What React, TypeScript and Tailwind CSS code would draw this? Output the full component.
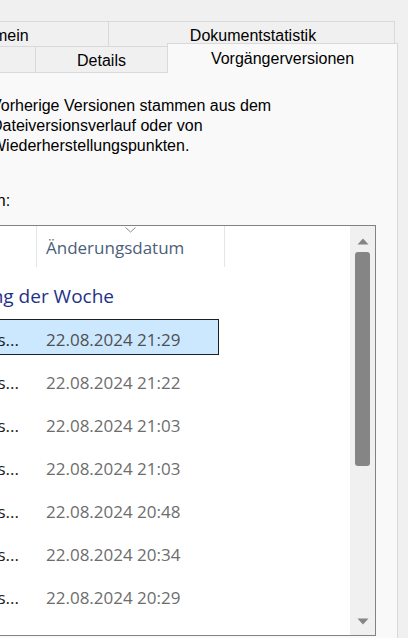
import React from "react";

const times = ["21:29", "21:22", "21:03", "21:03", "20:48", "20:34", "20:29", "19:51"];

function Row({ time, selected }: { time: string; selected?: boolean }) {
  return (
    <div className="h-[43px] pt-[3px]">
      <div
        className={
          selected
            ? "ml-[2px] flex h-[36px] w-[317px] items-center border border-[#1f1f1f] bg-[#cce8ff] pt-[5px]"
            : "ml-[2px] flex h-[36px] w-[317px] items-center border border-transparent pt-[5px]"
        }
      >
        <div className="flex w-[133px] shrink-0 justify-end overflow-hidden whitespace-nowrap pr-[17px] text-[#1a1a1a]">
          <span className="shrink-0">Bewerbungsunterlagen s...</span>
        </div>
        <div className={selected ? "pl-[10px] whitespace-nowrap text-[#505050]" : "pl-[10px] whitespace-nowrap text-[#6d6d6d]"}>
          22.08.2024 {time}
        </div>
      </div>
    </div>
  );
}

export default function App() {
  return (
    <div className="h-[638px] w-[408px] overflow-hidden bg-[#f0f0f0] font-['Liberation_Sans',Arial,sans-serif] text-[16px] text-black">
      <div className="-ml-[140px] w-[548px] pt-[21px]">
        {/* tab row 1 */}
        <div className="ml-[18px] flex h-[25px]">
          <div className="flex w-[231px] items-center justify-center border-l border-r border-t border-[#d9d9d9] bg-[#f0f0f0] pt-[3px] whitespace-nowrap">
            Allgemein
          </div>
          <div className="flex w-[286px] items-center justify-center border-r border-t border-[#d9d9d9] bg-[#f0f0f0] pl-[3px] pt-[3px] whitespace-nowrap">
            Dokumentstatistik
          </div>
        </div>
        {/* tab row 2 */}
        <div className="relative z-10 ml-[18px] flex h-[26px] items-end">
          <div className="flex h-[26px] w-[158px] items-center justify-center border-l border-r border-t border-[#d9d9d9] bg-[#f0f0f0] pt-[2px] whitespace-nowrap">
            Sicherheit
          </div>
          <div className="flex h-[26px] w-[131px] items-center justify-center border-t border-[#d9d9d9] bg-[#f0f0f0] pt-[2px] whitespace-nowrap">
            Details
          </div>
          <div className="-mb-px flex h-[30px] w-[231px] items-center justify-center border-l border-r border-t border-[#d9d9d9] bg-[#f9f9f9] whitespace-nowrap">
            Vorgängerversionen
          </div>
        </div>
        {/* panel */}
        <div className="ml-[18px] h-[600px] w-[520px] border border-[#d9d9d9] bg-[#f9f9f9] pl-[20px] pr-[21px]">
          <div className="mt-[23px] flex">
            <div className="w-[92px] shrink-0 pt-[2px]">
              <svg width="32" height="32" viewBox="0 0 32 32">
                <rect x="3" y="6" width="24" height="20" rx="2" fill="#f3c750" />
                <circle cx="20" cy="20" r="8" fill="#ffffff" stroke="#2b78d0" strokeWidth="2" />
                <path d="M20 15v5h4" fill="none" stroke="#2b78d0" strokeWidth="2" />
              </svg>
            </div>
            <div className="leading-[20px] whitespace-nowrap">
              Vorherige Versionen stammen aus dem
              <br />
              Dateiversionsverlauf oder von
              <br />
              Wiederherstellungspunkten.
            </div>
          </div>
          <div className="mt-[35px] leading-[20px]">Dateiversionen:</div>
          {/* list box */}
          <div className="mt-[14px] flex h-[411px] w-[477px] border border-[#828282] bg-white font-['Open_Sans',sans-serif] text-[17px]">
            <div className="min-w-0 flex-1 overflow-hidden">
              {/* header */}
              <div className="flex h-[41px] text-[#4c607a]">
                <div className="flex w-[137px] shrink-0 items-center border-r border-[#e5e5e5] pl-[10px] pt-[3px]">Name</div>
                <div className="relative flex w-[188px] shrink-0 items-center border-r border-[#e5e5e5] pl-[9px] pt-[3px] whitespace-nowrap">
                  Änderungsdatum
                  <svg className="absolute left-[88px] top-[1px]" width="11" height="6" viewBox="0 0 11 6">
                    <path d="M0.5 0.5 L5.5 5 L10.5 0.5" fill="none" stroke="#8a8a8a" strokeWidth="1" />
                  </svg>
                </div>
                <div className="flex-1" />
              </div>
              {/* group header */}
              <div className="flex h-[49px] w-[214px] justify-end overflow-hidden pt-[16px] text-[19px] leading-[26px] text-[#1e3287] whitespace-nowrap">
                <span className="shrink-0">Anfang der Woche</span>
              </div>
              {times.map((t, i) => (
                <Row key={i} time={t} selected={i === 0} />
              ))}
            </div>
            {/* scrollbar */}
            <div className="flex w-[25px] shrink-0 flex-col items-center bg-[#f0f0f0] pb-[10px] pt-[12px]">
              <svg width="12" height="7" viewBox="0 0 12 7">
                <path d="M6 0.5 L11.5 6.5 L0.5 6.5 Z" fill="#858585" />
              </svg>
              <div className="mt-[7px] h-[214px] w-[15px] rounded-[3px] bg-[#858585]" />
              <div className="flex-1" />
              <svg width="12" height="7" viewBox="0 0 12 7">
                <path d="M0.5 0.5 L11.5 0.5 L6 6.5 Z" fill="#858585" />
              </svg>
            </div>
          </div>
        </div>
      </div>
    </div>
  );
}
